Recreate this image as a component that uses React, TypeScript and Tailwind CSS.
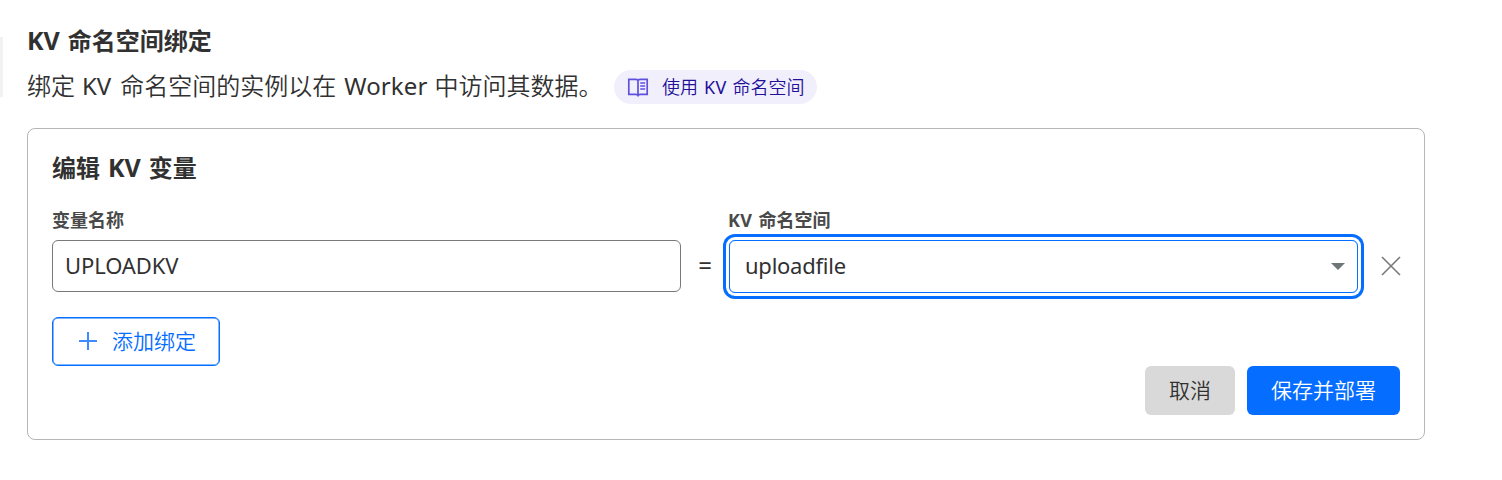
import React from "react";

function BookIcon() {
  return (
    <svg width="22" height="20" viewBox="0 0 22 20" fill="none" stroke="#5f50df" strokeWidth="1.7" className="shrink-0">
      <path d="M11 18.3C10.3 17.5 9.5 17.3 8.5 17.3H1.8V2.3H8.5C9.5 2.3 10.4 2.5 11 3.3C11.6 2.5 12.5 2.3 13.5 2.3H20.2V17.3H13.5C12.5 17.3 11.7 17.5 11 18.3ZM11 3.3V19.5" />
      <path d="M13.2 6H18.2M13.2 9H18.2M13.2 12H18.2" />
    </svg>
  );
}

export default function App() {
  return (
    <div className="flex h-[480px] w-[1502px] overflow-hidden bg-white font-['Noto_Sans','Noto_Sans_CJK_SC',sans-serif] whitespace-nowrap text-[#313131]">
      <div className="mt-[37px] h-[60px] w-[3px] shrink-0 bg-[#f2f2f2]" />
      <main className="ml-6 w-[1398px] shrink-0 pt-[23px]">
        <h1 className="flex h-9 items-center text-2xl font-bold">
          <span className="text-[25px]">KV</span>
          <span className="ml-2">命名空间绑定</span>
        </h1>
        <div className="mt-[9px] flex h-9 items-center text-2xl">
          <span className="font-[350]">绑定</span>
          <span className="ml-[7px]">KV</span>
          <span className="ml-[9px] font-[350]">命名空间的实例以在</span>
          <span className="ml-2 tracking-[0.1px]">Worker</span>
          <span className="ml-[7px] font-[350]">中访问其数据。</span>
          <a className="mt-px ml-auto flex h-[34px] w-[203px] items-center rounded-full bg-[#f2effd] pl-[13px] text-lg text-[#1f1199]">
            <BookIcon />
            <span className="ml-[13px] font-[350]">使用</span>
            <span className="ml-[6px] tracking-[0.3px]">KV</span>
            <span className="ml-[6px] font-[350]">命名空间</span>
          </a>
          <span className="w-[608px] shrink-0" />
        </div>
        <section className="mt-6 flex h-[312px] flex-col rounded-lg border border-[#b6b6b6] px-6 pt-[23px]">
          <h2 className="flex h-8 items-center text-2xl font-bold">
            <span>编辑</span>
            <span className="ml-2 text-[25px]">KV</span>
            <span className="ml-2">变量</span>
          </h2>
          <div className="mt-[22px] flex">
            <div className="w-[629px] shrink-0">
              <label className="flex h-[27px] items-center text-lg font-bold text-[#4a4a4a]">变量名称</label>
              <div className="mt-[7px] flex h-[52px] items-center rounded-md border border-[#797979] pb-0.5 pl-3 text-[22px] tracking-[-0.1px]">UPLOADKV</div>
            </div>
            <div className="flex w-[48px] shrink-0 items-center justify-center pt-[30px] text-[24px]">=</div>
            <div className="w-[629px] shrink-0">
              <label className="-ml-px flex h-[27px] items-center text-lg font-bold text-[#4a4a4a]">
                <span className="tracking-[0.4px]">KV</span>
                <span className="ml-[6px]">命名空间</span>
              </label>
              <div className="mt-[7px] flex h-[53px] items-center justify-between rounded-md border border-[#056dff] pr-3 pl-[15px] text-[22px] tracking-[-0.25px] ring-3 ring-[#056dff] ring-offset-3 ring-offset-white">
                <span className="pb-0.5">uploadfile</span>
                <svg width="14" height="7" viewBox="0 0 14 7" fill="#6f7678"><path d="M0 0H14L7 7Z" /></svg>
              </div>
            </div>
            <svg width="20" height="20" viewBox="0 0 20 20" fill="none" stroke="#797979" strokeWidth="1.6" className="mt-[50px] ml-[23px] shrink-0">
              <path d="M1 1L19 19M19 1L1 19" />
            </svg>
          </div>
          <button className="mt-6 flex h-[49px] w-[168px] items-center rounded-md border border-[#056dff] pl-[26px] text-[21px] font-[350] text-[#056dff] inset-ring-[0.5px] inset-ring-[#056dff]">
            <svg width="18" height="18" viewBox="0 0 18 18" fill="none" stroke="#3d8bff" strokeWidth="2" className="-mt-0.5"><path d="M9 0V18M0 9H18" /></svg>
            <span className="ml-[15px]">添加绑定</span>
          </button>
          <div className="flex justify-end gap-3 text-[21px] font-[350]">
            <button className="h-[49px] w-[90px] rounded-md bg-[#d9d9d9]">取消</button>
            <button className="h-[49px] w-[153px] rounded-md bg-[#056dff] text-white">保存并部署</button>
          </div>
        </section>
      </main>
    </div>
  );
}
